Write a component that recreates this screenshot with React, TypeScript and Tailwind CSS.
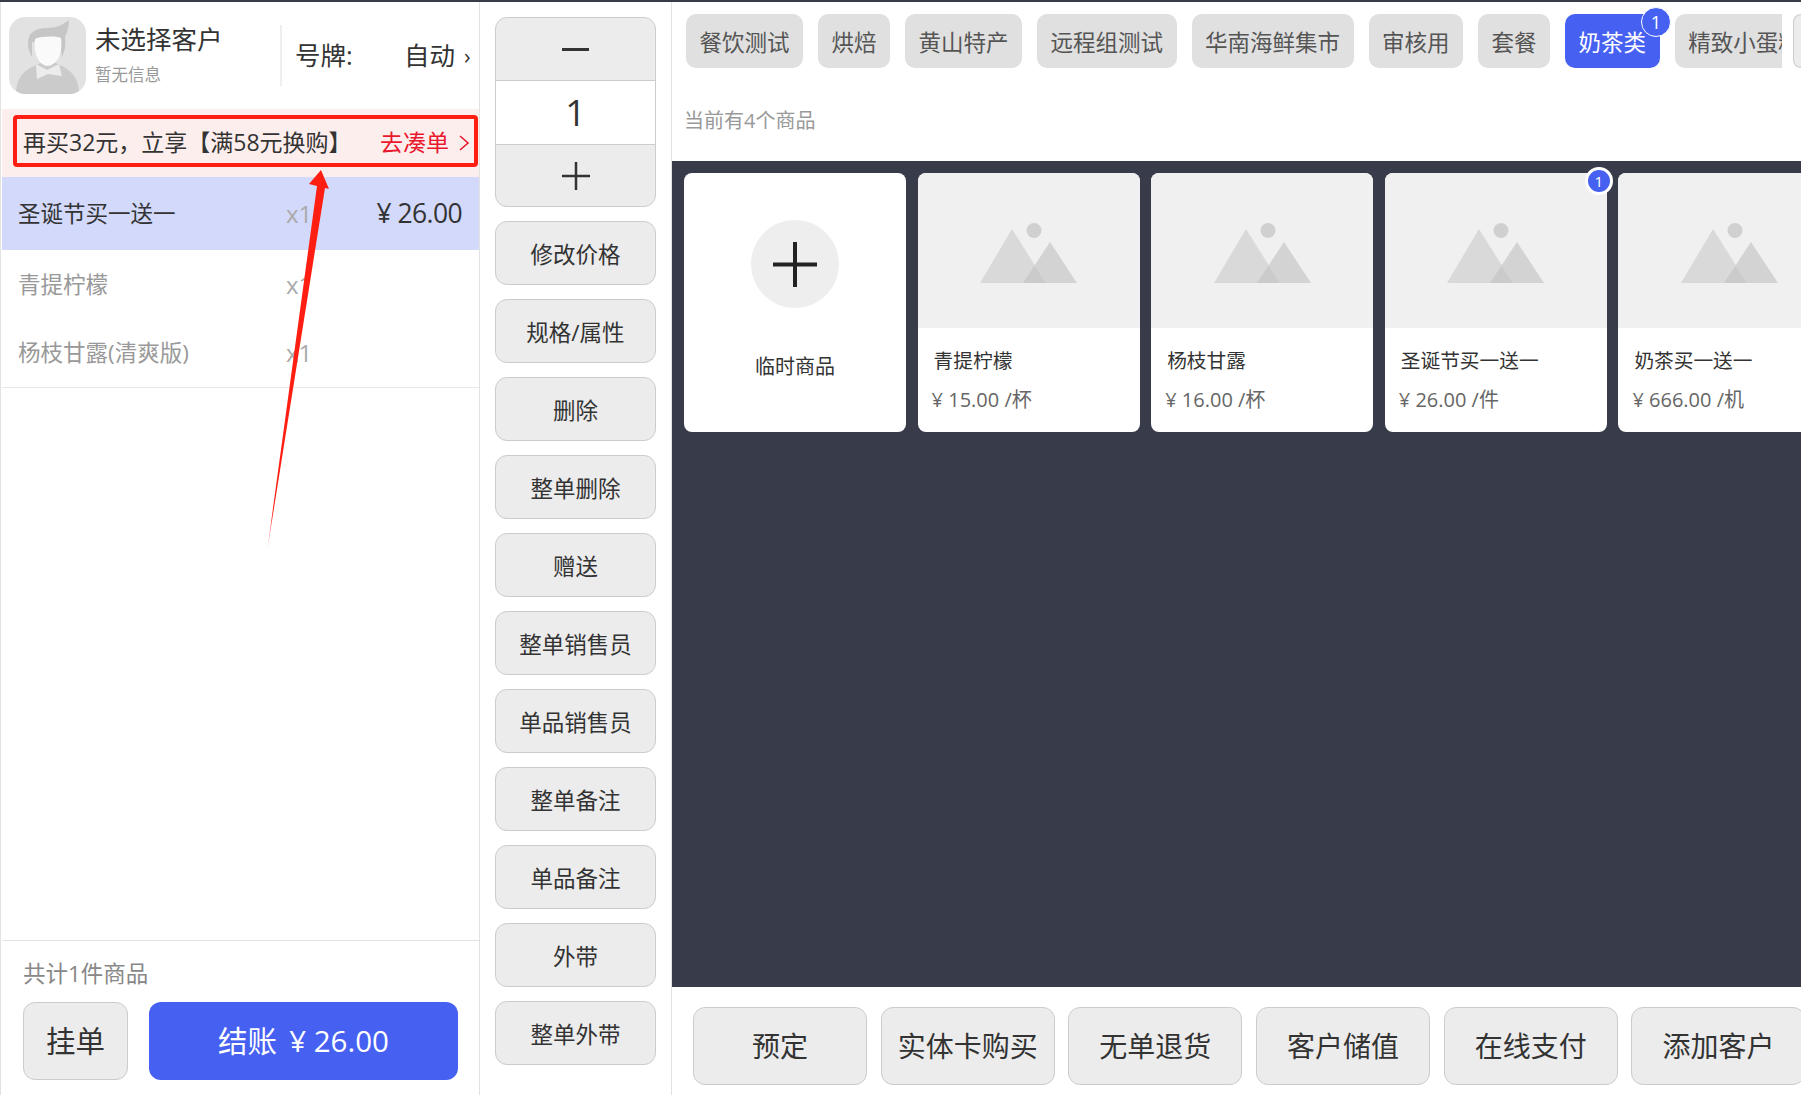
import React from 'react';

const sideActions = ['修改价格', '规格/属性', '删除', '整单删除', '赠送', '整单销售员', '单品销售员', '整单备注', '单品备注', '外带', '整单外带'];
const bottomActions = ['预定', '实体卡购买', '无单退货', '客户储值', '在线支付', '添加客户'];

const tabs = [
  { name: '餐饮测试' },
  { name: '烘焙' },
  { name: '黄山特产' },
  { name: '远程组测试' },
  { name: '华南海鲜集市' },
  { name: '审核用' },
  { name: '套餐' },
  { name: '奶茶类', active: true, count: 1 },
  { name: '精致小蛋糕' },
];

const products = [
  { name: '青提柠檬', price: '15.00', unit: '杯' },
  { name: '杨枝甘露', price: '16.00', unit: '杯' },
  { name: '圣诞节买一送一', price: '26.00', unit: '件', count: 1 },
  { name: '奶茶买一送一', price: '666.00', unit: '机' },
];

function Avatar() {
  return (
    <svg width="77" height="77" viewBox="0 0 77 77" className="shrink-0">
      <rect width="77" height="77" rx="16" fill="#e2e2e2" />
      <path d="M7 74c1-13 7-20 18-25l6-3h16l6 3c10 5 16 12 17 25-3 2-6 3-9 3H16c-3 0-6-1-9-3z" fill="#cbcbcb" />
      <path d="M27 47l11 6 12-6 3 12-14-2-11 5z" fill="#ececec" />
      <path d="M23 40c-4-7-5-14-3-20 3-7 10-9 18-9 9 0 16-3 22-8 0 7-2 12-4 17 1 7 0 14-3 20l-2-14-28-1z" fill="#c6c6c6" />
      <path d="M26 22c7-3 20-3 26-1 1 8 0 16-3 21-3 4-7 7-10 7-4 0-8-3-10-7-3-5-4-12-3-20z" fill="#fafafa" />
    </svg>
  );
}

function Placeholder() {
  return (
    <svg width="97" height="60" viewBox="0 0 97 60">
      <path d="M0 60L32 6l34 54z" fill="#d9d9d9" />
      <path d="M43 60L70 19l27 41z" fill="#d3d3d3" />
      <path d="M43 60l11.500-17L66 60z" fill="#cbcbcb" />
      <circle cx="54" cy="7.500" r="7.500" fill="#d0d0d0" />
    </svg>
  );
}

function CountBadge({ count, className }: { count: number; className: string }) {
  return (
    <span className={`absolute flex items-center justify-center rounded-full bg-[#4661f2] text-white ${className}`}>
      {count}
    </span>
  );
}

function GreyButton({ label, className }: { label: string; className: string }) {
  return (
    <button className={`flex items-center justify-center rounded-xl border border-[#cccccc] bg-[#ececec] text-[#333333] ${className}`}>
      {label}
    </button>
  );
}

function OrderRow({ name, selected }: { name: string; selected?: boolean }) {
  return (
    <div className={`flex items-center pl-[16px] pr-[17px] ${selected ? 'h-[73px] bg-[#d2d9fa] text-[#333333]' : 'h-[68px] pt-[2px] text-[#999999]'}`}>
      <span className="w-[268px] text-[22.5px]">{name}</span>
      <span className="text-[24px] text-[#aaaaaa]">x1</span>
      {selected && <span className="ml-auto text-[26.5px] tracking-[-0.6px]">¥ 26.00</span>}
    </div>
  );
}

export default function App() {
  return (
    <div
      className="relative flex h-[1095px] w-full overflow-hidden border-t-2 border-[#383b4a] bg-white"
      style={{ fontFamily: '"Open Sans", "Noto Sans CJK SC", sans-serif' }}
    >
      {/* order column */}
      <div className="flex w-[480px] shrink-0 flex-col border-x border-[#e2e2e2] pl-px">
        <div className="flex h-[107px] items-center pl-[7px]">
          <Avatar />
          <div className="ml-[9px] mt-[-4px] w-[185px]">
            <div className="text-[25.5px] leading-[36px] text-[#333333]">未选择客户</div>
            <div className="mt-[6px] text-[16.5px] leading-[24px] text-[#999999]">暂无信息</div>
          </div>
          <div className="h-[61px] w-[2px] bg-[#eeeeee]" />
          <span className="ml-[13px] w-[109px] text-[25.5px] text-[#333333]">号牌:</span>
          <span className="text-[25.5px] text-[#333333]">自动</span>
          <span className="ml-[9px] text-[22px] text-[#333333]">›</span>
        </div>

        <div className="bg-[#fdeeee] pb-[10px] pl-[11px] pt-[6px]">
          <div className="flex h-[52px] w-[465px] items-center rounded-[4px] border-[4px] border-[#ff1e12] pl-[6px] pr-[4px] pt-[3px]">
            <span className="text-[23px] text-[#333333]">{'再买32元\uFF0C立享【满58元换购】'}</span>
            <span className="ml-auto text-[23px] text-[#e8192c]">去凑单</span>
            <svg width="12" height="18" viewBox="0 0 12 18" className="ml-[9px]">
              <path d="M2 2l8 7-8 7" fill="none" stroke="#e8192c" strokeWidth="1.6" />
            </svg>
          </div>
        </div>

        <OrderRow name="圣诞节买一送一" selected />
        <OrderRow name="青提柠檬" />
        <OrderRow name="杨枝甘露(清爽版)" />

        <div className="mt-px flex-1 border-t border-[#e8e8e8]" />

        <div className="h-[155px] border-t border-[#e2e2e2] px-[21px]">
          <div className="mt-[17px] text-[22.5px] leading-[32px] text-[#888888]">共计1件商品</div>
          <div className="mt-[12px] flex gap-[21px]">
            <GreyButton label="挂单" className="h-[78px] w-[105px] text-[29.5px]" />
            <button className="flex h-[78px] w-[309px] items-center justify-center rounded-xl bg-[#4661f2] text-[29.5px] text-white">
              结账<span className="ml-[12px]">¥ 26.00</span>
            </button>
          </div>
        </div>
      </div>

      {/* action column */}
      <div className="flex w-[192px] shrink-0 flex-col gap-[14px] border-r border-[#e2e2e2] pl-[15px] pt-[15px]">
        <div className="flex h-[190px] w-[161px] flex-col overflow-hidden rounded-xl border border-[#cccccc] bg-[#ececec] text-[#333333]">
          <div className="flex h-[62px] items-center justify-center">
            <div className="h-[3px] w-[27px] bg-[#333333]" />
          </div>
          <div className="flex h-[65px] items-center justify-center border-y border-[#cccccc] bg-white text-[36px]">1</div>
          <div className="relative flex flex-1 items-center justify-center">
            <svg width="28" height="28" viewBox="0 0 28 28">
              <path d="M0 14h28M14 0v28" stroke="#333333" strokeWidth="2.500" />
            </svg>
          </div>
        </div>
        {sideActions.map((label) => (
          <GreyButton key={label} label={label} className="h-[64px] w-[161px] shrink-0 pt-[3px] text-[22.5px]" />
        ))}
      </div>

      {/* catalogue */}
      <div className="flex min-w-0 flex-1 flex-col">
        <div className="flex h-[159px] flex-col">
          <div className="flex pl-[14px] pt-[12px]">
            <div className="flex h-[54px] w-[1096px] shrink-0 gap-[15px] overflow-hidden">
              {tabs.map((tab) => (
                <button
                  key={tab.name}
                  className={`h-[54px] shrink-0 whitespace-nowrap rounded-[10px] px-[13.500px] pt-[3px] text-[22.5px] ${tab.active ? 'bg-[#4661f2] text-white' : 'bg-[#e0e0e0] text-[#555555]'}`}
                >
                  {tab.name}
                </button>
              ))}
            </div>
            <div className="ml-[11px] h-[54px] w-[8px] shrink-0 rounded-l-[10px] border border-r-0 border-[#cccccc] bg-[#ececec]" />
          </div>
          <div className="ml-[12px] mt-[38px] text-[20px] leading-[30px] text-[#999999]">当前有4个商品</div>
        </div>

        <div className="flex h-[826px] gap-[11.6px] overflow-hidden bg-[#383b4a] pl-[12px] pt-[12px]">
          <div className="flex h-[259px] w-[222px] shrink-0 flex-col items-center rounded-lg bg-white">
            <div className="mt-[47px] flex h-[88px] w-[88px] items-center justify-center rounded-full bg-[#eeeeee]">
              <svg width="44" height="45" viewBox="0 0 44 45">
                <path d="M0 22.500h44M22 0v45" stroke="#222222" strokeWidth="4" />
              </svg>
            </div>
            <div className="mt-[44px] text-[20px] leading-[30px] text-[#333333]">临时商品</div>
          </div>
          {products.map((p) => (
            <div key={p.name} className="relative h-[259px] w-[222px] shrink-0 rounded-lg bg-white">
              <div className="flex h-[155px] items-start justify-center rounded-t-lg bg-[#f0f0f0] pt-[50px]">
                <Placeholder />
              </div>
              <div className="pl-[16px] pt-[18px] text-[19.7px] leading-[30px] text-[#333333]">{p.name}</div>
              <div className="pl-[14px] pt-[9px] text-[20px] leading-[30px] text-[#666666]">
                ¥ {p.price} /{p.unit}
              </div>
              {p.count && (
                <CountBadge
                  count={p.count}
                  className="right-[-6px] top-[-6px] h-[28px] w-[28px] border-[3px] border-white text-[15px]"
                />
              )}
            </div>
          ))}
        </div>

        <div className="flex flex-1 gap-[13.7px] pl-[21px] pt-[20px]">
          {bottomActions.map((label) => (
            <GreyButton key={label} label={label} className="h-[78px] w-[174px] shrink-0 text-[28px]" />
          ))}
        </div>
      </div>

      {/* tab badge sits over the tab strip */}
      <CountBadge count={1} className="left-[1641px] top-[5px] h-[30px] w-[30px] border border-white text-[18px]" />

      {/* red annotation arrow */}
      <svg width="340" height="560" viewBox="0 0 340 560" className="pointer-events-none absolute left-0 top-[-2px]">
        <defs>
          <linearGradient id="arrowFade" x1="0" y1="170" x2="0" y2="552" gradientUnits="userSpaceOnUse">
            <stop offset="0.9" stopColor="#ff1e12" />
            <stop offset="1" stopColor="#ff1e12" stopOpacity="0.25" />
          </linearGradient>
        </defs>
        <path d="M321 170l8 19-4-1L267 552 317 186l-8-2z" fill="url(#arrowFade)" />
      </svg>
    </div>
  );
}
